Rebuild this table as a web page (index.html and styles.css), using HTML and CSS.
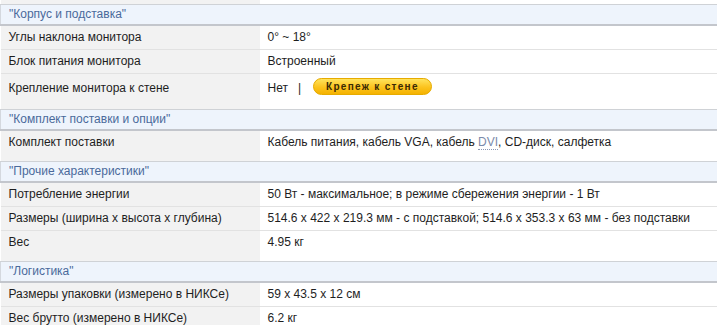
FILE: index.html
```html
<!DOCTYPE html>
<html lang="ru">
<head>
    <meta charset="UTF-8">
    <title>Характеристики монитора</title>
    <link rel="stylesheet" href="styles.css">
</head>
<body>
    <table class="specs">
        <tr class="spacer"><td class="name"></td><td class="value"></td></tr>

        <tr class="group"><th colspan="2">"Корпус и подставка"</th></tr>
        <tr><td class="name">Углы наклона монитора</td><td class="value">0° ~ 18°</td></tr>
        <tr><td class="name">Блок питания монитора</td><td class="value">Встроенный</td></tr>
        <tr class="last mount">
            <td class="name">Крепление монитора к стене</td>
            <td class="value">Нет &nbsp; | &nbsp; <a class="buy-btn" href="#">Крепеж к стене</a></td>
        </tr>

        <tr class="group"><th colspan="2">"Комплект поставки и опции"</th></tr>
        <tr class="last"><td class="name">Комплект поставки</td><td class="value">Кабель питания, кабель VGA, кабель <span class="term">DVI</span>, CD-диск, салфетка</td></tr>

        <tr class="group"><th colspan="2">"Прочие характеристики"</th></tr>
        <tr><td class="name">Потребление энергии</td><td class="value">50 Вт - максимальное; в режиме сбережения энергии - 1 Вт</td></tr>
        <tr><td class="name">Размеры (ширина х высота х глубина)</td><td class="value">514.6 x 422 x 219.3 мм - с подставкой; 514.6 x 353.3 x 63 мм - без подставки</td></tr>
        <tr class="last"><td class="name">Вес</td><td class="value">4.95 кг</td></tr>

        <tr class="group"><th colspan="2">"Логистика"</th></tr>
        <tr><td class="name">Размеры упаковки (измерено в НИКСе)</td><td class="value">59 x 43.5 x 12 см</td></tr>
        <tr><td class="name">Вес брутто (измерено в НИКСе)</td><td class="value">6.2 кг</td></tr>
    </table>
</body>
</html>
```

FILE: styles.css
```css
body {
    margin: 0;
    padding: 0;
    background: #fff;
    font-family: "Liberation Sans", Arial, sans-serif;
    font-size: 12px;
    color: #1e1e1e;
}
.specs {
    width: 100%;
    border-collapse: collapse;
}
.specs td {
    padding: 4px 8px;
    line-height: 15px;
    border-bottom: 1px solid #e2e2e2;
    vertical-align: top;
    text-align: left;
    white-space: nowrap;
}
.specs .name {
    width: 243px;
    background: #f2f2f2;
}
.specs .value {
    background: #fff;
}
.specs .spacer td {
    padding: 0;
    height: 4px;
    line-height: 4px;
    border-bottom: none;
}
.specs .last td {
    padding-bottom: 11px;
    border-bottom: none;
}
.specs .mount td {
    padding-top: 7px;
}
.specs .mount .value {
    padding-bottom: 13px;
}
.group th {
    padding: 2px 8px;
    line-height: 15px;
    font-size: 12px;
    text-align: left;
    font-weight: normal;
    color: #4a6a9b;
    background: #eef4fc;
    border-top: 1px solid #cfd2d6;
    border-bottom: 2px solid #c3c6cc;
    border-left: 1px solid #d4d8de;
}
.term {
    color: #7b8bab;
    border-bottom: 1px dotted #8a98b4;
}
.buy-btn {
    display: inline-block;
    margin: -4px 0 0 2px;
    padding: 0 12px;
    height: 15px;
    line-height: 15px;
    border: 1px solid #e6ab00;
    border-radius: 9px;
    background: linear-gradient(#ffe35c, #fcc31e 55%, #f4b200);
    color: #3a2a04;
    font-size: 10px;
    font-weight: bold;
    letter-spacing: 1.3px;
    text-decoration: none;
    vertical-align: middle;
}
```
